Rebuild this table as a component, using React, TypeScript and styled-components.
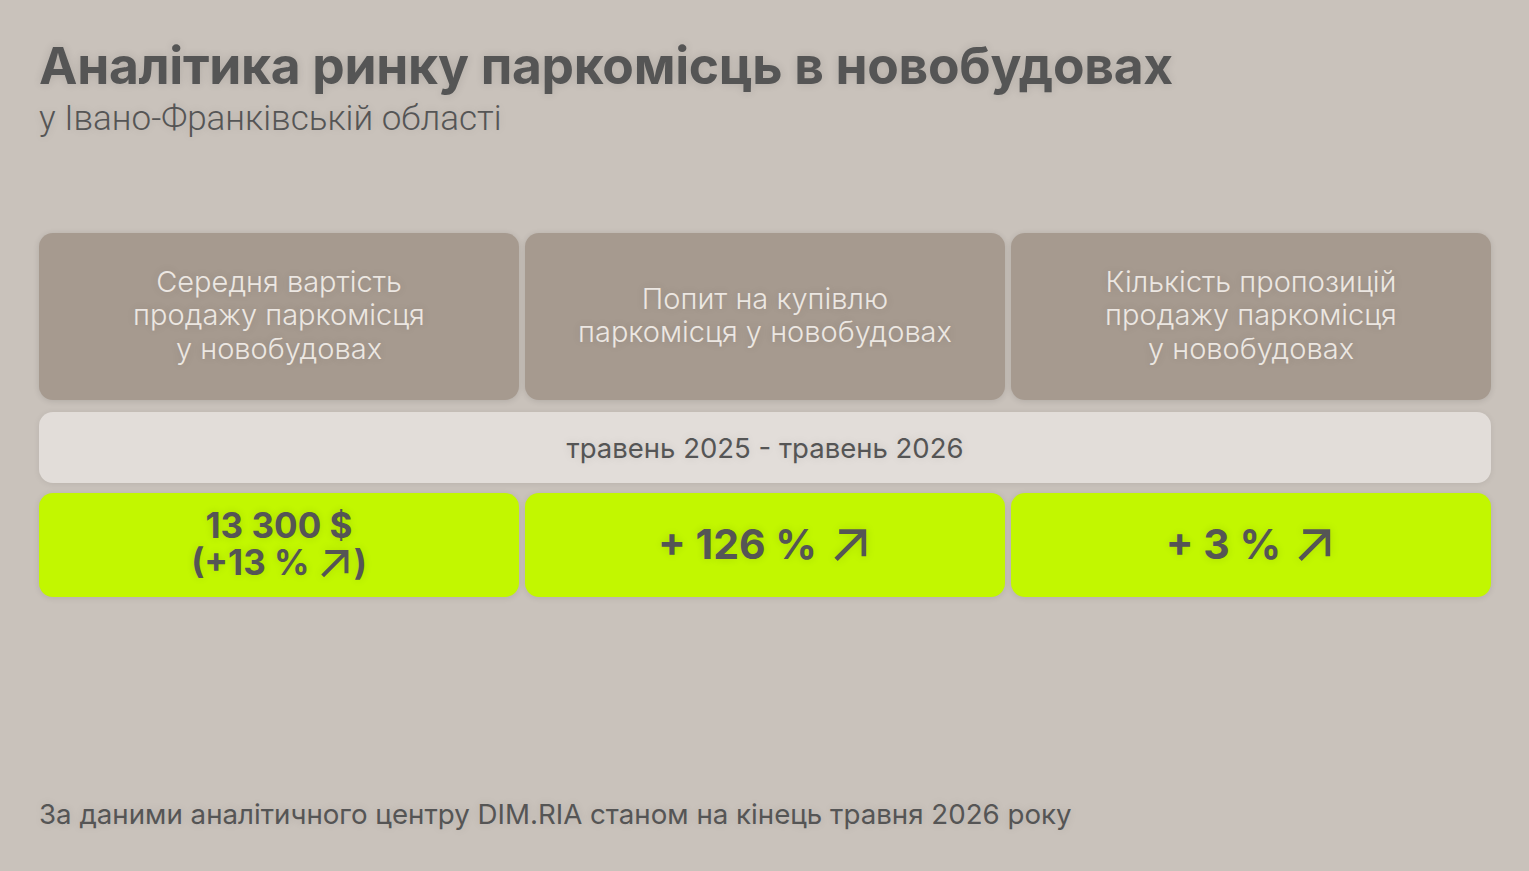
import React from "react";
import styled, { createGlobalStyle } from "styled-components";

const Global = createGlobalStyle`
  html, body { margin: 0; padding: 0; }
  body {
    background: #c9c2bb;
    font-family: Inter, "Noto Sans", sans-serif;
    color: #555555;
  }
  #root { min-height: 100vh; }
`;

const Page = styled.div`
  width: 1529px;
  height: 871px;
  box-sizing: border-box;
  padding: 36px 39px 0 39px;
  display: flex;
  flex-direction: column;
  background: #c9c2bb;
`;

const Title = styled.h1`
  margin: 0;
  font-size: 51.5px;
  font-weight: 700;
  letter-spacing: -0.3px;
  line-height: 58px;
  color: #555555;
  text-shadow: 0 0 10px rgba(0, 0, 0, 0.12);
`;

const Subtitle = styled.div`
  margin-top: 5px;
  font-family: Roboto, "Noto Sans", sans-serif;
  font-size: 35px;
  font-weight: 300;
  line-height: 40px;
  color: #555555;
  text-shadow: 0 0 10px rgba(0, 0, 0, 0.1);
`;

const Grid = styled.div`
  margin-top: 94px;
  width: 1452px;
  display: grid;
  grid-template-columns: repeat(3, 1fr);
  column-gap: 6px;
  row-gap: 10px;
`;

const Head = styled.div`
  height: 167px;
  box-sizing: border-box;
  padding-bottom: 3px;
  border-radius: 14px;
  background: #a69a8f;
  box-shadow: 0 1px 6px rgba(0, 0, 0, 0.12);
  display: flex;
  align-items: center;
  justify-content: center;
  text-align: center;
  font-size: 29px;
  font-weight: 300;
  line-height: 33.5px;
  color: #ece7e2;
  text-shadow: 0 0 10px rgba(0, 0, 0, 0.12);
`;

const Period = styled.div`
  grid-column: 1 / -1;
  margin-top: 2px;
  height: 71px;
  border-radius: 14px;
  background: #e2ddd9;
  box-shadow: 0 1px 6px rgba(0, 0, 0, 0.08);
  display: flex;
  align-items: center;
  justify-content: center;
  font-size: 27.5px;
  font-weight: 400;
  color: #555555;
  text-shadow: 0 0 10px rgba(0, 0, 0, 0.1);
`;

const Value = styled.div<{ $small?: boolean }>`
  height: 104px;
  box-sizing: border-box;
  padding-bottom: 2px;
  border-radius: 14px;
  background: #c2f700;
  box-shadow: 0 1px 6px rgba(0, 0, 0, 0.1);
  display: flex;
  flex-direction: column;
  align-items: center;
  justify-content: center;
  text-align: center;
  font-size: ${(p) => (p.$small ? "35px" : "41px")};
  font-weight: 700;
  line-height: 37px;
  color: #555555;
  text-shadow: 0 0 8px rgba(0, 0, 0, 0.12);
`;

const Line = styled.div`
  display: flex;
  align-items: center;
  justify-content: center;
  height: 37px;
`;

const Arrow = styled.svg<{ $size: number; $gap: number }>`
  width: ${(p) => p.$size}px;
  height: ${(p) => p.$size}px;
  margin-left: ${(p) => p.$gap}px;
  margin-right: 4px;
  flex: none;
  filter: drop-shadow(0 0 4px rgba(0, 0, 0, 0.12));
`;

const Footer = styled.div`
  margin-top: auto;
  margin-bottom: 40px;
  font-size: 27.7px;
  font-weight: 400;
  line-height: 34px;
  color: #555555;
  text-shadow: 0 0 10px rgba(0, 0, 0, 0.1);
`;

const Up = ({ size, gap }: { size: number; gap: number }) => (
  <Arrow $size={size} $gap={gap} viewBox="0 0 34 34" fill="none">
    <path
      d="M3 31.5 L30 4.5 M6 4.5 H30 V28.5"
      stroke="#555555"
      strokeWidth="4.5"
      strokeLinecap="butt"
      strokeLinejoin="miter"
    />
  </Arrow>
);

export default function App() {
  return (
    <>
      <Global />
      <Page>
        <Title>Аналітика ринку паркомісць в новобудовах</Title>
        <Subtitle>у Івано-Франківській області</Subtitle>
        <Grid>
          <Head>
            Середня вартість
            <br />
            продажу паркомісця
            <br />у новобудовах
          </Head>
          <Head>
            Попит на купівлю
            <br />
            паркомісця у новобудовах
          </Head>
          <Head>
            Кількість пропозицій
            <br />
            продажу паркомісця
            <br />у новобудовах
          </Head>
          <Period>травень 2025 - травень 2026</Period>
          <Value $small>
            <Line>13 300 $</Line>
            <Line>
              (+13 %<Up size={30} gap={10} />)
            </Line>
          </Value>
          <Value>
            <Line>
              + 126 %<Up size={35} gap={16} />
            </Line>
          </Value>
          <Value>
            <Line>
              + 3 %<Up size={35} gap={16} />
            </Line>
          </Value>
        </Grid>
        <Footer>
          За даними аналітичного центру DIM.RIA станом на кінець травня 2026 року
        </Footer>
      </Page>
    </>
  );
}
